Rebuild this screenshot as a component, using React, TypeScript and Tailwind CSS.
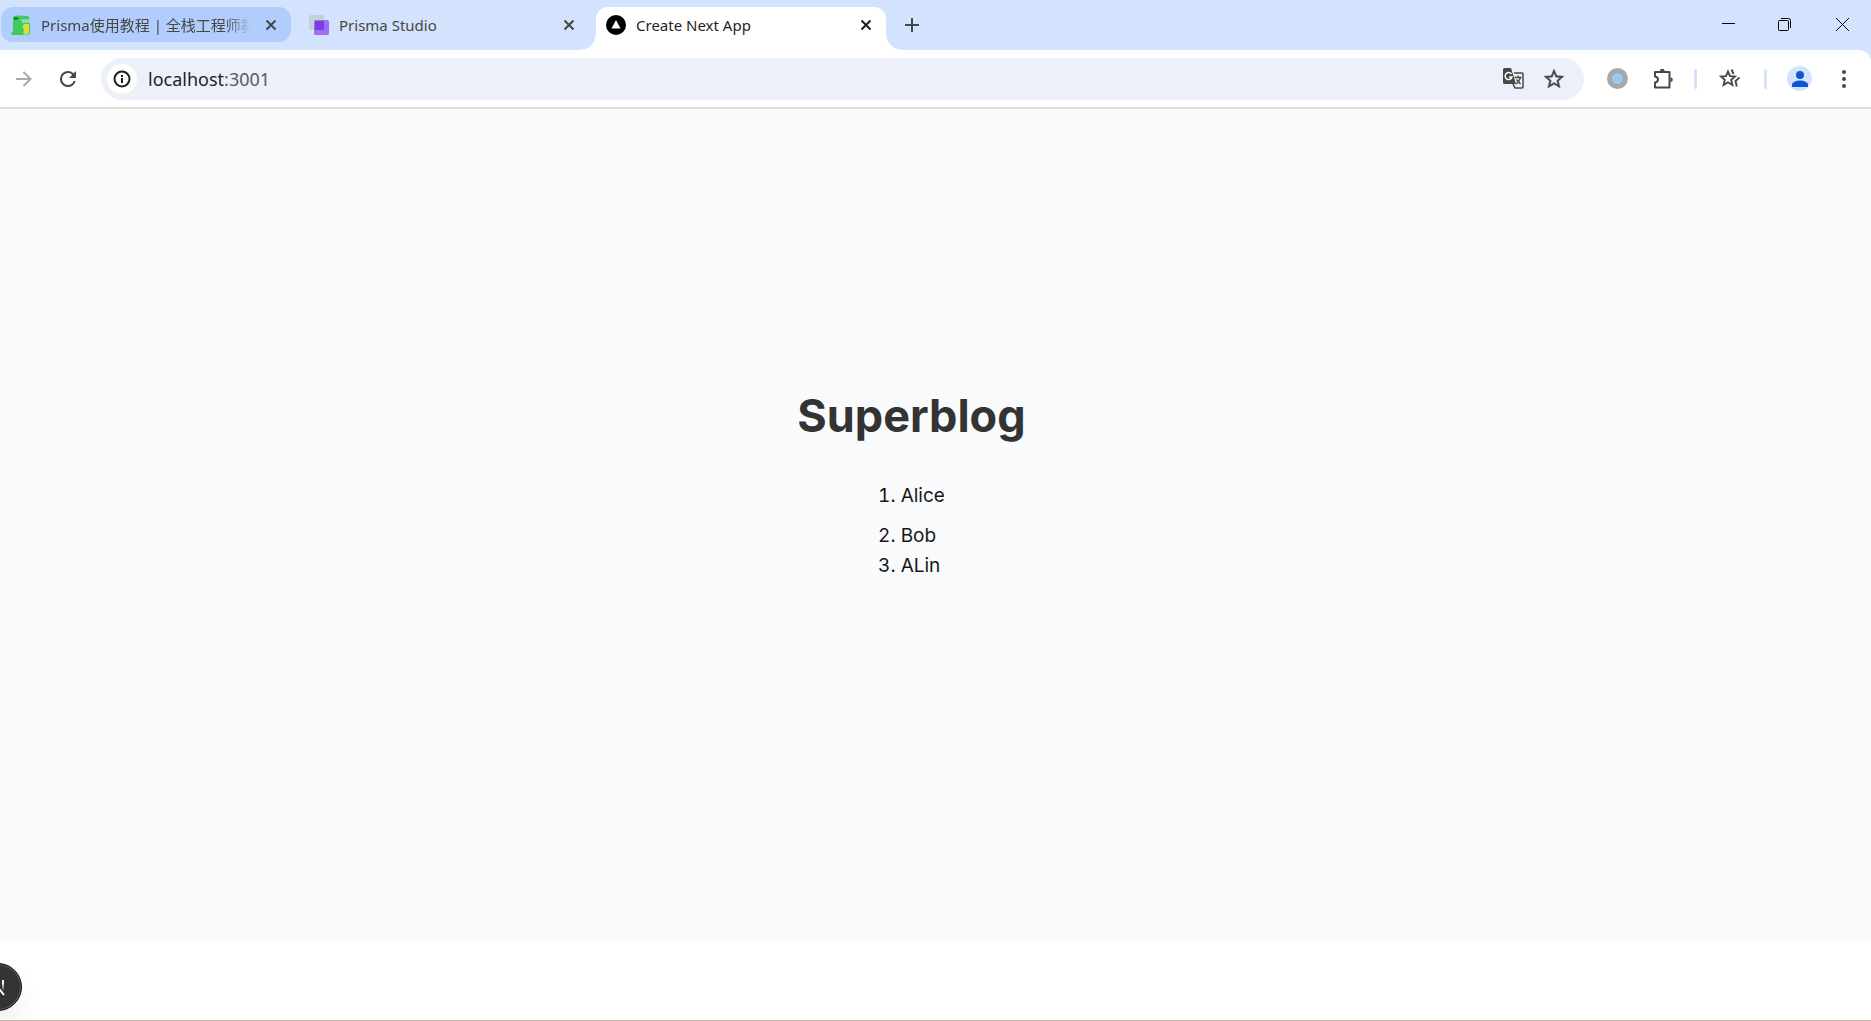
import type { ReactNode } from "react";

const UI = "font-['Noto_Sans','Noto_Sans_CJK_SC',sans-serif]";

function CloseIcon() {
  return (
    <svg viewBox="0 0 12 12" className="size-3" fill="none" stroke="currentColor" strokeWidth="2">
      <path d="M1.5 1.5l9 9M10.5 1.5l-9 9" />
    </svg>
  );
}

function DinoIcon() {
  return (
    <svg viewBox="0 0 20 20" className="size-5 shrink-0">
      <path d="M2 2Q3 0 6 .5L17 1Q19 2 18.500 9H19V19Q16 20 14 19L12 20H1L0 18L2 16Z" fill="#3dcc5c" />
      <path d="M10 4.500h8.500v3H11z" fill="#c4e8d2" />
      <path d="M11 6h7" stroke="#5f9f7a" strokeDasharray="1.500 1" />
      <path d="M13 9h5v9.500l-4 .5-2-1.500 1.500-3.500H12V11z" fill="#d9e23a" />
      <path d="M3 4l1-1 1 1 1-1 1 1" fill="none" stroke="#174d27" strokeWidth="1.200" />
    </svg>
  );
}

function PrismaIcon() {
  return (
    <svg viewBox="0 0 20 20" className="size-5 shrink-0">
      <rect width="15" height="15" rx="1.500" fill="#c5d0d8" />
      <rect x="5" y="5" width="15" height="15" rx="1.500" fill="#a06df6" />
      <rect x="6" y="6" width="9" height="9" fill="#7b3fe0" />
    </svg>
  );
}

function NextIcon() {
  return (
    <svg viewBox="0 0 20 20" className="size-5 shrink-0">
      <circle cx="10" cy="10" r="10" />
      <path d="M10 5l4.500 8.500h-9z" fill="#fff" />
    </svg>
  );
}

function Tab({ icon, title, tone, faded }: { icon: ReactNode; title: string; tone: string; faded?: boolean }) {
  return (
    <div className={`flex w-[290px] shrink-0 items-center rounded-xl pr-[14px] pl-[10px] ${tone}`}>
      {icon}
      <button
        className={`ml-[10px] flex-1 overflow-hidden text-left text-[15px] leading-5 whitespace-nowrap ${faded ? "[mask-image:linear-gradient(to_right,#000_88%,transparent)]" : ""}`}
      >
        {title}
      </button>
      <button aria-label={`Close ${title}`} className="ml-[15px]">
        <CloseIcon />
      </button>
    </div>
  );
}

export default function App() {
  return (
    <div className="flex min-h-screen flex-col overflow-hidden border-b border-[#c8b8b0] bg-white">
      <header className={UI}>
        <div className="flex h-[50px] items-start bg-[#d3e2fd] pt-[7px] text-[#474747]">
          <div className="flex min-w-0 pl-px">
            <Tab icon={<DinoIcon />} title="Prisma使用教程 | 全栈工程师教" tone="h-[35px] bg-[#b0cdfb]" faded />
            <div className="ml-2 flex">
              <Tab icon={<PrismaIcon />} title="Prisma Studio" tone="h-[35px]" />
            </div>
            <div className="relative ml-[7px] h-[43px] rounded-t-xl bg-white text-[#1f1f1f]">
              <span className="absolute bottom-0 -left-[15px] size-[15px] bg-[radial-gradient(circle_at_0_0,#d3e2fd_14px,#fff_15px)]" />
              <Tab icon={<NextIcon />} title="Create Next App" tone="h-[35px]" />
              <span className="absolute -right-[15px] bottom-0 size-[15px] bg-[radial-gradient(circle_at_100%_0,#d3e2fd_14px,#fff_15px)]" />
            </div>
            <button aria-label="New tab" className="ml-[19px] flex h-[35px] items-center">
              <svg viewBox="0 0 14 14" className="size-[14px]" stroke="currentColor" strokeWidth="2">
                <path d="M7 0v14M0 7h14" />
              </svg>
            </button>
          </div>
          <div className="ml-auto flex h-[35px] items-center gap-[43px] pr-[22px] text-black">
            <button aria-label="Minimize">
              <svg viewBox="0 0 13 13" className="size-[13px]" stroke="currentColor"><path d="M0 5.500h13" /></svg>
            </button>
            <button aria-label="Restore">
              <svg viewBox="0 0 13 13" className="size-[13px]" fill="none" stroke="currentColor">
                <rect x=".5" y="2.500" width="10" height="10" rx="1" />
                <path d="M3 .5h7.500a2 2 0 0 1 2 2V10" />
              </svg>
            </button>
            <button aria-label="Close" className="ml-[2px]">
              <svg viewBox="0 0 13 13" className="size-[13px]" stroke="currentColor"><path d="M0 0l13 13M13 0L0 13" /></svg>
            </button>
          </div>
        </div>

        <div className="bg-[#d3e2fd]">
          <div className="flex h-[59px] items-center rounded-tr-xl border-b-2 border-[#dfe1de] bg-white pr-[25px] pl-4 text-[#474747]">
            <button aria-label="Forward" className="text-[#a9a9a9]">
              <svg viewBox="0 0 16 16" className="size-4" fill="none" stroke="currentColor" strokeWidth="2">
                <path d="M0 8h14M7.500 1l7 7-7 7" />
              </svg>
            </button>
            <button aria-label="Reload" className="ml-7">
              <svg viewBox="4 4 16 16" className="size-4" fill="currentColor">
                <path d="M17.650 6.350A7.960 7.960 0 0 0 12 4a8 8 0 1 0 7.730 10h-2.080A6 6 0 1 1 12 6c1.660 0 3.140.690 4.220 1.780L13 11h7V4z" />
              </svg>
            </button>
            <div className="ml-[25px] flex h-[42px] flex-1 items-center rounded-full bg-[#ebf0f9] pr-5 pl-[6px]">
              <button aria-label="Site information" className="flex size-[30px] items-center justify-center rounded-full bg-white text-[#1f1f1f]">
                <svg viewBox="0 0 18 18" className="size-[18px]" fill="none" stroke="currentColor" strokeWidth="2">
                  <circle cx="9" cy="9" r="7.500" />
                  <path d="M9 8v5M9 5v2" />
                </svg>
              </button>
              <label className="relative ml-[11px] flex-1 text-[18px] leading-6 text-[#5a5a5a]">
                <span aria-hidden="true"><span className="text-[#1f1f1f]">localhost</span>:3001</span>
                <input aria-label="Address" defaultValue="localhost:3001" className="absolute inset-0 text-transparent outline-none" />
              </label>
              <button aria-label="Translate">
                <svg viewBox="0 0 21 21" className="size-[21px]">
                  <path d="M11 5h8A1 1 0 0 1 20 6v13a1 1 0 0 1-1 1h-7l-2-4" fill="none" stroke="#474747" strokeWidth="1.500" />
                  <path d="M1.500 0H8l5 16H1.500A1.500 1.500 0 0 1 0 14.500v-13A1.500 1.500 0 0 1 1.500 0z" fill="#474747" />
                  <path d="M8.500 6a3.500 3.500 0 1 0 .5 3H6" fill="none" stroke="#fff" strokeWidth="1.500" />
                  <path d="M11.500 9.500h7M15 7.500v2M17.500 9.500q-1 4-4.500 6.500M13.500 11.500l4 4.500" fill="none" stroke="#474747" strokeWidth="1.300" />
                </svg>
              </button>
              <button aria-label="Bookmark" className="ml-5">
                <svg viewBox="2 2 20 19" className="h-[19px] w-5" fill="currentColor" stroke="currentColor" strokeWidth=".4">
                  <path d="M22 9.240l-7.190-.620L12 2 9.190 8.630 2 9.240l5.460 4.730L5.820 21 12 17.270 18.180 21l-1.630-7.030zM12 15.400l-3.760 2.270 1-4.280-3.320-2.880 4.380-.380L12 6.100l1.710 4.040 4.380.380-3.320 2.880 1 4.280z" />
                </svg>
              </button>
            </div>
            <button aria-label="Recorder" className="ml-[23px] size-[21px] rounded-full border-5 border-[#a8a8a8] bg-[#98caef]" />
            <button aria-label="Extensions" className="ml-[25px]">
              <svg viewBox="0 0 21 20" className="h-5 w-[21px]" fill="none" stroke="currentColor" strokeWidth="2">
                <path d="M2 3h14.500v15.500H2v-5q3-.5 3-3t-3-3z" strokeLinejoin="round" />
                <path d="M7 2a2.300 2.300 0 0 1 4.600 0zM17.500 8.500a2.300 2.300 0 0 1 0 4.600z" fill="currentColor" stroke="none" />
              </svg>
            </button>
            <span className="ml-5 h-5 w-[3px] rounded-full bg-[#d3e2fd]" />
            <button aria-label="All bookmarks" className="ml-[22px]">
              <svg viewBox="0 0 21 19" className="h-[19px] w-[21px]" fill="none" stroke="currentColor" strokeWidth="1.900">
                <path d="M9 2.500l2 4.700 5 .4-3.800 3.300 1.200 5.100L9 13.300 4.600 16l1.200-5.100L2 7.600l5-.4z" />
                <path d="M12.500 .5l2 4.500M20.500 8.500l-4 3.500 1.300 5.500" />
              </svg>
            </button>
            <span className="ml-6 h-5 w-[3px] rounded-full bg-[#d3e2fd]" />
            <button aria-label="Profile" className="ml-5 flex size-[25px] items-center justify-center rounded-full bg-[#d3e2fd]">
              <svg viewBox="0 0 16 16" className="size-4" fill="#0b57d0">
                <circle cx="8" cy="4" r="4" />
                <path d="M0 16v-2.500C0 11 5 9.500 8 9.500s8 1.500 8 4V16z" />
              </svg>
            </button>
            <button aria-label="Menu" className="ml-[30px]">
              <svg viewBox="0 0 4 18" className="h-[18px] w-1" fill="currentColor">
                <circle cx="2" cy="2" r="2" /><circle cx="2" cy="9" r="2" /><circle cx="2" cy="16" r="2" />
              </svg>
            </button>
          </div>
        </div>
      </header>

      <main className="flex flex-1 flex-col items-center justify-center bg-[#f9fafc] pr-12 pb-[78px] font-['Inter',sans-serif] text-[#171717]">
        <h1 className="mb-10 text-[45px] leading-[50px] font-bold text-[#333333]">Superblog</h1>
        <ol className="list-inside list-decimal text-[19px] leading-[30px]">
          <li className="mb-[10px]">Alice</li>
          <li>Bob</li>
          <li>ALin</li>
        </ol>
      </main>

      <footer className="flex h-[79px] items-center pt-3">
        <button aria-label="Open Next.js Dev Tools" className="-ml-[26px] flex size-12 items-center justify-center rounded-full border border-[#171717] bg-[#333333] shadow-[0_16px_32px_-8px_#00000024] ring-1 ring-white/20 ring-inset">
          <svg viewBox="0 0 18 18" className="size-[18px]" fill="none" strokeWidth="2">
            <defs>
              <linearGradient id="stem" x1="0" y1="0" x2="0" y2="18" gradientUnits="userSpaceOnUse">
                <stop offset=".25" stopColor="#fff" />
                <stop offset=".75" stopColor="#fff" stopOpacity="0" />
              </linearGradient>
            </defs>
            <path d="M3 17V2l12 15" stroke="#fff" />
            <path d="M14 2v11" stroke="url(#stem)" />
          </svg>
        </button>
      </footer>
    </div>
  );
}
